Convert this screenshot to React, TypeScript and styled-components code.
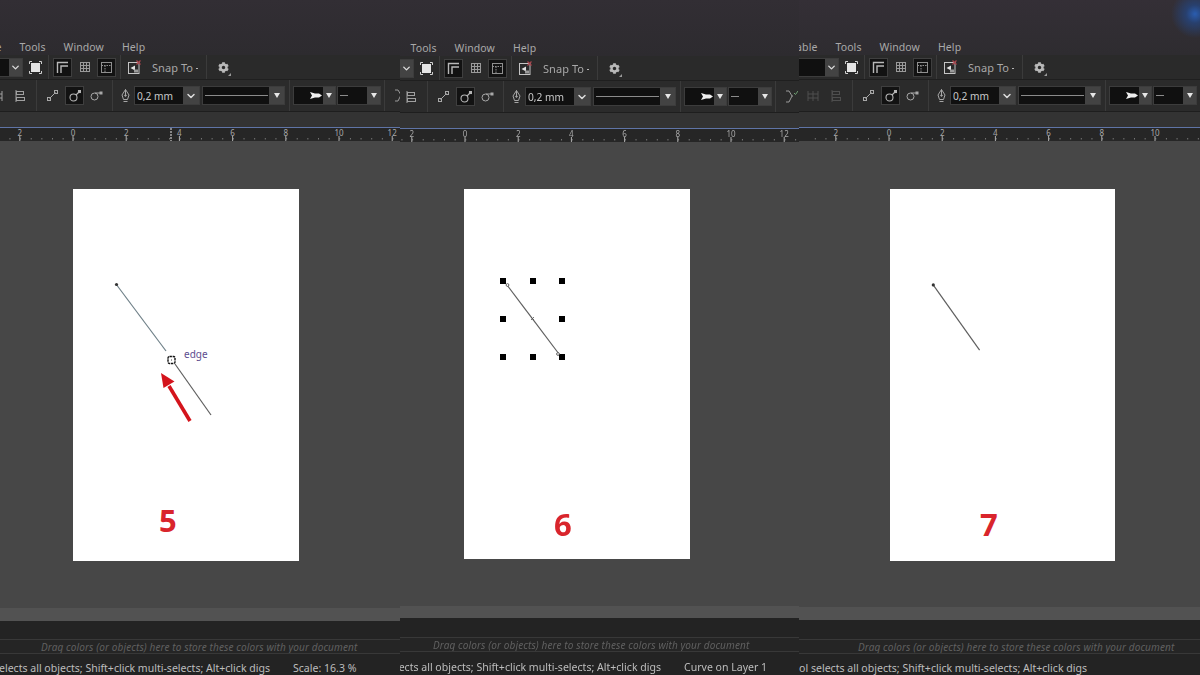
import React from "react";
import styled, { createGlobalStyle } from "styled-components";
import { ChevronDown } from "lucide-react";
import { FaCog } from "react-icons/fa";

const GlobalStyle = createGlobalStyle`
  html, body {
    margin: 0;
    height: 675px;
    overflow: hidden;
    background: #232323;
    font-family: "Noto Sans", "Open Sans", sans-serif;
  }
`;

const Screen = styled.div`
  display: flex;
  width: 1200px;
  height: 675px;
  overflow: hidden;
  filter: blur(0.3px);
`;

const Panel = styled.section<{ $w: number; $edge?: boolean }>`
  position: relative;
  display: flex;
  flex-direction: column;
  flex: 0 0 ${(p) => p.$w}px;
  height: 675px;
  overflow: hidden;
  box-shadow: ${(p) => (p.$edge ? "inset 1px 0 0 rgba(255,255,255,0.09)" : "none")};
`;

const TitleArea = styled.div<{ $h: number; $glow?: boolean }>`
  flex: 0 0 ${(p) => p.$h}px;
  display: flex;
  align-items: flex-end;
  background: ${(p) =>
    p.$glow
      ? "radial-gradient(circle at 396px 14px, #2a5db0 0, #28406e 9px, rgba(50,46,54,0) 24px), linear-gradient(#342f36, #2e2c30)"
      : "linear-gradient(#322e34, #2d2b2f)"};
`;

const Menu = styled.nav<{ $shift: number }>`
  display: flex;
  gap: 18px;
  margin-left: ${(p) => p.$shift - 25}px;
  height: 15px;
  line-height: 15px;
  font-size: 10.5px;
  letter-spacing: 0.1px;
  color: #a9a9a9;
  white-space: nowrap;
`;

const MainBar = styled.div`
  flex: 0 0 25px;
  box-sizing: border-box;
  display: flex;
  align-items: center;
  background: #2a2a2a;
  border-bottom: 1px solid #1f1f1f;
`;

const PropsBar = styled.div`
  flex: 0 0 32px;
  box-sizing: border-box;
  display: flex;
  align-items: center;
  background: #2b2b2b;
  border-bottom: 1px solid #1e1e1e;
`;

const BarRow = styled.div<{ $start: number }>`
  display: flex;
  align-items: center;
  flex: none;
  margin-left: ${(p) => p.$start}px;
`;

const Tool = styled.span<{ $w: number; $ml?: number; $active?: boolean; $dim?: boolean }>`
  position: relative;
  display: flex;
  align-items: center;
  justify-content: center;
  flex: none;
  box-sizing: border-box;
  width: ${(p) => p.$w}px;
  height: 19px;
  margin-left: ${(p) => p.$ml ?? 0}px;
  background: ${(p) => (p.$active ? "#121212" : "transparent")};
  border: ${(p) => (p.$active ? "1px solid #3f3f3f" : "none")};
  opacity: ${(p) => (p.$dim ? 0.3 : 1)};
  color: #b9b9b9;
`;

const CornerMark = styled.i`
  position: absolute;
  right: 0;
  bottom: 1px;
  width: 0;
  height: 0;
  border-left: 3px solid transparent;
  border-bottom: 3px solid #9a9a9a;
`;

const Separator = styled.span<{ $ml: number; $tall?: boolean }>`
  flex: none;
  width: 1px;
  height: ${(p) => (p.$tall ? 31 : 24)}px;
  margin-left: ${(p) => p.$ml}px;
  background: #3b3b3b;
`;

const Combo = styled.div<{ $w: number; $ml?: number; $caret: number }>`
  display: grid;
  grid-template-columns: 1fr ${(p) => p.$caret}px;
  flex: none;
  box-sizing: border-box;
  width: ${(p) => p.$w}px;
  height: 19px;
  margin-left: ${(p) => p.$ml ?? 0}px;
  background: #101010;
  border: 1px solid #3c3c3c;
`;

const ComboField = styled.span<{ $end?: boolean }>`
  display: flex;
  align-items: center;
  justify-content: ${(p) => (p.$end ? "flex-end" : "flex-start")};
  min-width: 0;
  padding: 0 1px 0 2px;
  font-size: 10.2px;
  color: #c8c8c8;
  white-space: nowrap;
`;

const ComboCaret = styled.span`
  display: flex;
  align-items: center;
  justify-content: center;
  background: #434343;
  color: #dcdcdc;
`;

const Triangle = styled.i`
  display: block;
  width: 0;
  height: 0;
  border-left: 3.5px solid transparent;
  border-right: 3.5px solid transparent;
  border-top: 5px solid #e6e6e6;
`;

const LinePreview = styled.i<{ $short?: boolean }>`
  display: block;
  width: ${(p) => (p.$short ? "8px" : "100%")};
  height: 1.5px;
  background: #8b8b8b;
`;

const SnapLabel = styled.span`
  flex: none;
  width: 54px;
  margin-left: 11px;
  font-size: 11px;
  letter-spacing: 0.05px;
  color: #a8a8a8;
  white-space: nowrap;
`;

const SnapDash = styled.i`
  display: inline-block;
  width: 2px;
  height: 1px;
  margin: 0 0 3px 3px;
  background: #b5b5b5;
`;

const Band = styled.div`
  flex: 0 0 15px;
  background: #333333;
`;

const RulerBar = styled.div`
  flex: 0 0 14px;
  box-sizing: border-box;
  background: #262626;
  border-top: 1px solid #5f74a6;
`;

const RulerMarks = styled.svg`
  display: block;
  width: 402px;
  height: 13px;
`;

const Canvas = styled.main<{ $left: number; $top: number }>`
  flex: 1;
  min-height: 0;
  padding: ${(p) => p.$top}px 0 0 ${(p) => p.$left}px;
  background: #474747;
`;

const Sheet = styled.div<{ $w: number; $h: number }>`
  position: relative;
  width: ${(p) => p.$w}px;
  height: ${(p) => p.$h}px;
  background: #ffffff;
`;

const Drawing = styled.svg`
  position: absolute;
  inset: 0;
  width: 100%;
  height: 100%;
`;

const StepNumber = styled.span<{ $x: number; $y: number }>`
  position: absolute;
  left: ${(p) => p.$x}px;
  top: ${(p) => p.$y}px;
  font-family: "Open Sans", sans-serif;
  font-size: 31px;
  font-weight: 700;
  line-height: 32px;
  color: #d9252c;
`;

const EdgeHint = styled.span`
  position: absolute;
  left: 111px;
  top: 158px;
  font-size: 10px;
  line-height: 14px;
  color: #5d4d8f;
`;

const Strip = styled.div<{ $h: number }>`
  flex: 0 0 ${(p) => p.$h}px;
  background: #525252;
`;

const DarkBand = styled.div<{ $h: number }>`
  flex: 0 0 ${(p) => p.$h}px;
  background: #232323;
`;

const SwatchHint = styled.div<{ $left: number }>`
  flex: 0 0 15px;
  box-sizing: border-box;
  padding-left: ${(p) => p.$left}px;
  border-top: 1px solid #383838;
  border-bottom: 1px solid #383838;
  background: #252525;
  font-size: 10px;
  font-style: italic;
  line-height: 15px;
  letter-spacing: 0.12px;
  color: #606060;
  white-space: nowrap;
  overflow: hidden;
`;

const StatusBar = styled.footer<{ $h: number }>`
  flex: 0 0 ${(p) => p.$h}px;
  box-sizing: border-box;
  display: flex;
  align-items: center;
  padding-top: 7px;
  background: #232323;
  font-size: 10.55px;
  color: #bdbdbd;
  white-space: nowrap;
`;

const StatusHint = styled.span<{ $w: number }>`
  flex: 0 0 ${(p) => p.$w}px;
  min-width: 0;
  display: flex;
  justify-content: flex-end;
`;

const StatusInfo = styled.span`
  flex: none;
  margin-left: 23px;
`;

const FitIcon = () => (
  <svg width="13" height="13" viewBox="0 0 13 13" fill="none" stroke="#cfcfcf" strokeWidth="1">
    <rect x="2" y="2" width="9" height="9" fill="#e4e4e4" stroke="none" />
    <path d="M0.5 3V.5H3M10 .5h2.5V3M12.5 10v2.5H10M3 12.5H.5V10" />
  </svg>
);

const SnapCornerIcon = () => (
  <svg width="13" height="13" viewBox="0 0 13 13" fill="none" stroke="#b8b8b8" strokeWidth="1.4">
    <path d="M1.5 12V1.5H12M5 12V5h7" />
  </svg>
);

const GridIcon = () => (
  <svg width="12" height="12" viewBox="0 0 12 12" fill="none" stroke="#9a9a9a" strokeWidth="1">
    <rect x="1.5" y="1.5" width="9" height="9" />
    <path d="M4.5 1.5v9M7.5 1.5v9M1.5 4.5h9M1.5 7.5h9" />
  </svg>
);

const GuideIcon = () => (
  <svg width="13" height="13" viewBox="0 0 13 13" fill="none" stroke="#8f8f8f" strokeWidth="1">
    <rect x="1.5" y="1.5" width="10" height="10" />
    <path d="M1.5 4.5h10M5 4.5v7" strokeDasharray="1.5 1" />
  </svg>
);

const SnapPageIcon = () => (
  <svg width="13" height="14" viewBox="0 0 13 14" fill="none">
    <rect x="0.5" y="2.5" width="10.5" height="11" fill="#2a2a2a" stroke="#c4c4c4" />
    <path d="M2.5 8 7 5.5v5z" fill="#e2e2e2" />
    <path d="M6 9.5h4v3H6z" fill="#9a9a9a" />
    <path d="M8.5.5l4 4M12.5.5l-4 4" stroke="#a8444c" strokeWidth="1.2" />
  </svg>
);

const AlignIcon = () => (
  <svg width="10" height="12" viewBox="0 0 10 12" fill="none" stroke="#a0a0a0" strokeWidth="1">
    <path d="M1 0v12" />
    <rect x="1.5" y="1.5" width="7" height="3" />
    <rect x="1.5" y="7.5" width="8" height="3" />
  </svg>
);

const AlignDotsIcon = () => (
  <svg width="12" height="10" viewBox="0 0 12 10" fill="none" stroke="#a0a0a0" strokeWidth="1">
    <path d="M1 0v10M6 0v10M11 0v10M1 3h10M1 7h10" />
  </svg>
);

const NodeLineIcon = () => (
  <svg width="11" height="11" viewBox="0 0 11 11" fill="none" stroke="#a8a8a8" strokeWidth="1">
    <path d="M2.5 8.5l6-6" />
    <rect x="0.5" y="7.5" width="3" height="3" />
    <rect x="7.5" y="0.5" width="3" height="3" />
  </svg>
);

const NodeRingIcon = () => (
  <svg width="12" height="12" viewBox="0 0 12 12" fill="none" stroke="#b5b5b5" strokeWidth="1.1">
    <circle cx="4.5" cy="7.5" r="3.5" />
    <path d="M7 5l3.5-3.5" />
    <rect x="9.5" y="0.5" width="2" height="2" fill="#b5b5b5" />
  </svg>
);

const NodeOrbitIcon = () => (
  <svg width="13" height="10" viewBox="0 0 13 10" fill="none" stroke="#a8a8a8" strokeWidth="1">
    <circle cx="4.5" cy="5.5" r="3.5" />
    <path d="M5 2h5" />
    <rect x="10" y="1" width="2" height="2" fill="#a8a8a8" />
  </svg>
);

const PenIcon = () => (
  <svg width="9" height="14" viewBox="0 0 9 14" fill="none" stroke="#a6a6a6" strokeWidth="1">
    <path d="M4.5.5 1 6l1.5 4.5h4L8 6zM4.5.5V6M2.5 12.5h4" />
    <circle cx="4.5" cy="6.5" r="0.8" fill="#a6a6a6" />
  </svg>
);

const ArrowHeadIcon = () => (
  <svg width="12" height="7" viewBox="0 0 12 7">
    <path d="M0 0 5 1.5h4l3 2-3 2H5L0 7l2-3.5z" fill="#efefef" />
  </svg>
);

const ConnectorIcon = () => (
  <svg width="13" height="14" viewBox="0 0 13 14" fill="none" stroke="#9a9a9a" strokeWidth="1">
    <path d="M1 1h3l3 5-3 6H1M7 6h1" />
    <path d="M9 3l1.5 1.5L13 1" stroke="#6f9f72" />
  </svg>
);

const MainToolbar = ({ shift }: { shift: number }) => (
  <MainBar>
    <BarRow $start={shift - 77}>
      <Combo $w={100} $caret={13}>
        <ComboField />
        <ComboCaret>
          <ChevronDown size={11} strokeWidth={3} />
        </ComboCaret>
      </Combo>
      <Tool $w={13} $ml={6}>
        <FitIcon />
      </Tool>
      <Separator $ml={6} />
      <Tool $w={19} $ml={4} $active>
        <SnapCornerIcon />
      </Tool>
      <Tool $w={15} $ml={5}>
        <GridIcon />
      </Tool>
      <Tool $w={19} $ml={5} $active>
        <GuideIcon />
      </Tool>
      <Separator $ml={4} />
      <Tool $w={13} $ml={7}>
        <SnapPageIcon />
      </Tool>
      <SnapLabel>
        Snap To
        <SnapDash />
      </SnapLabel>
      <Separator $ml={0} />
      <Tool $w={16} $ml={8}>
        <FaCog size={11} />
        <CornerMark />
      </Tool>
    </BarRow>
  </MainBar>
);

const PropertyToolbar = ({ shift, dimAlign }: { shift: number; dimAlign?: boolean }) => (
  <PropsBar>
    <BarRow $start={shift - 9}>
      <Tool $w={12} $dim={dimAlign}>
        <AlignDotsIcon />
      </Tool>
      <Tool $w={12} $ml={11} $dim={dimAlign}>
        <AlignIcon />
      </Tool>
      <Separator $ml={10} $tall />
      <Tool $w={12} $ml={9}>
        <NodeLineIcon />
      </Tool>
      <Tool $w={19} $ml={7} $active>
        <NodeRingIcon />
      </Tool>
      <Tool $w={13} $ml={6}>
        <NodeOrbitIcon />
      </Tool>
      <Separator $ml={9} $tall />
      <Tool $w={11} $ml={7}>
        <PenIcon />
      </Tool>
      <Combo $w={66} $ml={3} $caret={16}>
        <ComboField>0,2 mm</ComboField>
        <ComboCaret>
          <ChevronDown size={12} strokeWidth={3} />
        </ComboCaret>
      </Combo>
      <Combo $w={83} $ml={2} $caret={15}>
        <ComboField>
          <LinePreview />
        </ComboField>
        <ComboCaret>
          <Triangle />
        </ComboCaret>
      </Combo>
      <Separator $ml={4} $tall />
      <Combo $w={43} $ml={3} $caret={12}>
        <ComboField $end>
          <ArrowHeadIcon />
        </ComboField>
        <ComboCaret>
          <Triangle />
        </ComboCaret>
      </Combo>
      <Combo $w={44} $ml={1} $caret={13}>
        <ComboField>
          <LinePreview $short />
        </ComboField>
        <ComboCaret>
          <Triangle />
        </ComboCaret>
      </Combo>
      <Separator $ml={3} $tall />
      <Tool $w={13} $ml={9}>
        <ConnectorIcon />
      </Tool>
    </BarRow>
  </PropsBar>
);

const labels = ["2", "0", "2", "4", "6", "8", "10", "12"];

const Ruler = ({ zero, cursor }: { zero: number; cursor?: number }) => {
  const origin = zero - 53.2;
  const minor = Array.from({ length: 48 }, (_, i) => origin - 21 + i * 10.64);
  return (
    <RulerBar>
      <RulerMarks>
        {minor.map((x) => (
          <rect key={x} x={x} y={10} width={1} height={1.5} fill="#767676" />
        ))}
        {labels.map((label, i) => {
          const x = origin + i * 53.2;
          return (
            <g key={i}>
              <rect x={x - 0.5} y={8} width={1} height={5} fill="#b0b0b0" />
              <text x={x} y={8} fontSize="8" fontFamily="Noto Sans" fill="#a8a8a8" textAnchor="middle">
                {label}
              </text>
            </g>
          );
        })}
        {cursor !== undefined && (
          <path d={`M${cursor} 0V13`} stroke="#e8e8e8" strokeWidth="1" strokeDasharray="2 1" />
        )}
      </RulerMarks>
    </RulerBar>
  );
};

const LINE = "#5f5f5f";

const EdgeDrawing = () => (
  <Drawing viewBox="0 0 226 372">
    <path d="M43 95 93 162" stroke="#6f8088" strokeWidth="1.2" />
    <path d="M102 175 138 226" stroke={LINE} strokeWidth="1.2" />
    <circle cx="43.5" cy="95.5" r="1.6" fill="#333" />
    <rect x="95" y="167.5" width="7" height="7" rx="1.5" fill="#fff" stroke="#111" strokeWidth="1.4" strokeDasharray="2.4 0.7" />
    <rect x="98" y="170.5" width="1" height="1" fill="#444" />
    <path d="M117 232 96 197" stroke="#d4141c" strokeWidth="3.6" />
    <path d="M88 184 101.5 192.5 90.5 199z" fill="#d4141c" />
  </Drawing>
);

const handleXs = [36, 66, 95];
const handleYs = [89, 127, 165];

const SelectedDrawing = () => (
  <Drawing viewBox="0 0 226 370">
    <path d="M43 96 95 165" stroke={LINE} strokeWidth="1.2" />
    {handleYs.flatMap((y, row) =>
      handleXs.map((x, col) =>
        row === 1 && col === 1 ? null : <rect key={`${x}-${y}`} x={x} y={y} width={6} height={6} fill="#000" />
      )
    )}
    <circle cx="43.5" cy="96" r="1.4" fill="#fff" stroke="#444" strokeWidth="0.8" />
    <path d="M67 128l3 3M70 128l-3 3" stroke="#555" strokeWidth="0.8" />
    <circle cx="94" cy="165" r="1.4" fill="#fff" stroke="#444" strokeWidth="0.8" />
  </Drawing>
);

const CutDrawing = () => (
  <Drawing viewBox="0 0 226 372">
    <path d="M43 95 90 161" stroke={LINE} strokeWidth="1.2" />
    <circle cx="43.5" cy="95.5" r="1.6" fill="#333" />
  </Drawing>
);

const hintText = "Drag colors (or objects) here to store these colors with your document";

const panels = [
  {
    w: 400, edge: false, shift: 0, top: 55, zero: 73, cursor: 171,
    pageLeft: 73, pageW: 226, pageH: 372, pageTop: 48,
    drawing: <EdgeDrawing />, step: "5", stepX: 86, stepY: 315, edgeHint: true,
    strip: 13, dark: 18, status: 21, hintLeft: 41, statusW: 270, info: "Scale: 16.3 %",
    statusText: "selects all objects; Shift+click multi-selects; Alt+click digs",
  },
  {
    w: 399, edge: true, shift: -9, top: 56, zero: 65, cursor: undefined,
    pageLeft: 64, pageW: 226, pageH: 370, pageTop: 47,
    drawing: <SelectedDrawing />, step: "6", stepX: 90, stepY: 319, edgeHint: false,
    strip: 12, dark: 19, status: 23, hintLeft: 33, statusW: 261, info: "Curve on Layer 1",
    statusText: "lects all objects; Shift+click multi-selects; Alt+click digs",
  },
  {
    w: 401, edge: true, shift: 17, top: 55, zero: 90, cursor: undefined,
    pageLeft: 91, pageW: 225, pageH: 372, pageTop: 48,
    drawing: <CutDrawing />, step: "7", stepX: 90, stepY: 319, edgeHint: false,
    strip: 13, dark: 19, status: 21, hintLeft: 59, statusW: 288, info: "",
    statusText: "ol selects all objects; Shift+click multi-selects; Alt+click digs",
  },
];

const App = () => (
  <Screen>
    <GlobalStyle />
    {panels.map((p) => (
      <Panel key={p.step} $w={p.w} $edge={p.edge}>
        <TitleArea $h={p.top} $glow={p.step === "7"}>
          <Menu $shift={p.shift}>
            <span>Table</span>
            <span>Tools</span>
            <span>Window</span>
            <span>Help</span>
          </Menu>
        </TitleArea>
        <MainToolbar shift={p.shift} />
        <PropertyToolbar shift={p.shift} dimAlign={p.step === "7"} />
        <Band />
        <Ruler zero={p.zero} cursor={p.cursor} />
        <Canvas $left={p.pageLeft} $top={p.pageTop}>
          <Sheet $w={p.pageW} $h={p.pageH}>
            {p.drawing}
            {p.edgeHint && <EdgeHint>edge</EdgeHint>}
            <StepNumber $x={p.stepX} $y={p.stepY}>
              {p.step}
            </StepNumber>
          </Sheet>
        </Canvas>
        <Strip $h={p.strip} />
        <DarkBand $h={p.dark} />
        <SwatchHint $left={p.hintLeft}>{hintText}</SwatchHint>
        <StatusBar $h={p.status}>
          <StatusHint $w={p.statusW}>{p.statusText}</StatusHint>
          {p.info && <StatusInfo>{p.info}</StatusInfo>}
        </StatusBar>
      </Panel>
    ))}
  </Screen>
);

export default App;
